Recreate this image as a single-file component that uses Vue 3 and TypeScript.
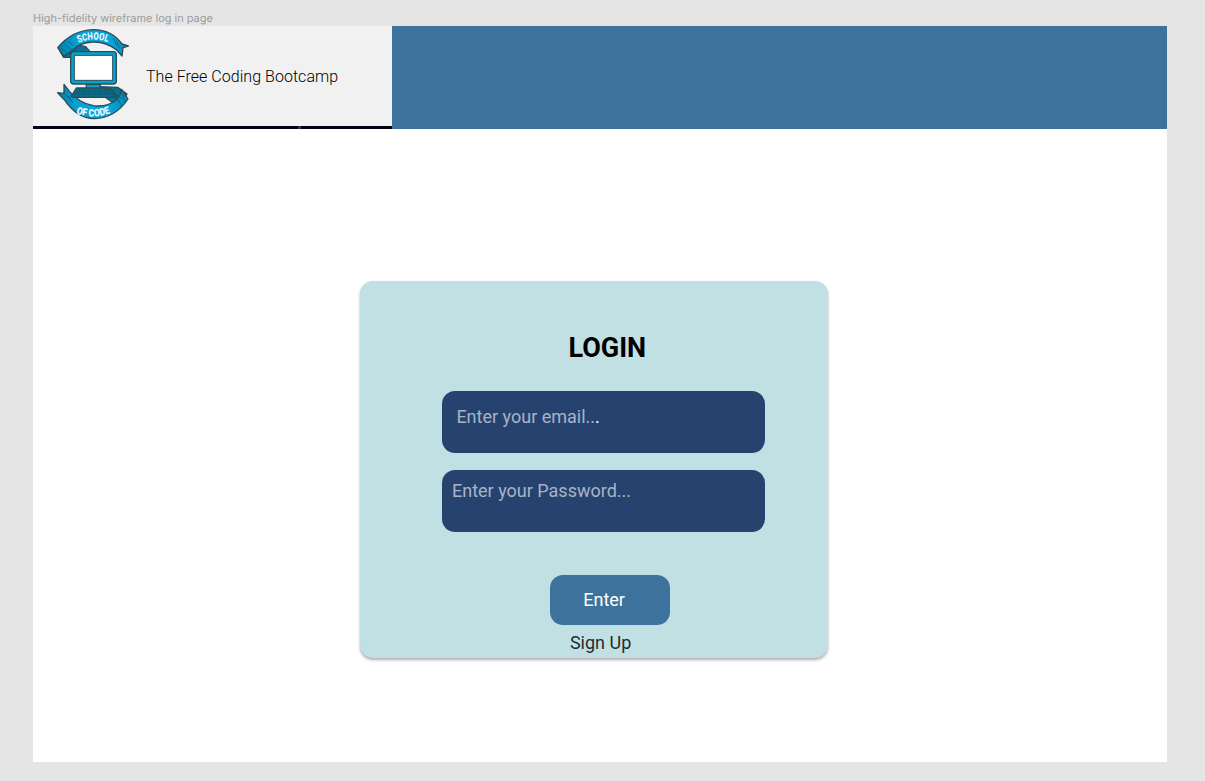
<script setup lang="ts">
import { ref } from 'vue'

interface Field {
  id: string
  label: string
  tail: string
}

const frameName = 'High-fidelity wireframe log in page'
const fields = ref<Field[]>([
  { id: 'email', label: 'Enter your email..', tail: '.' },
  { id: 'password', label: 'Enter your Password...', tail: '' },
])
</script>

<template>
  <div class="canvas">
    <div class="frame-name">{{ frameName }}</div>
    <main class="frame">
      <header class="header">
        <div class="brand">
          <svg class="logo" viewBox="0 0 300 330" aria-label="School of Code">
            <defs>
              <linearGradient id="ribbon" x1="0" x2="1" y1="0" y2="0">
                <stop offset="0" stop-color="#087da7" />
                <stop offset="0.28" stop-color="#06a2d6" />
                <stop offset="0.75" stop-color="#06a6da" />
                <stop offset="1" stop-color="#0789b5" />
              </linearGradient>
              <path id="arc-top" d="M84 78Q144 41 205 74" />
              <path id="arc-bottom" d="M76 274Q144 306 213 272" />
            </defs>
            <g stroke="#2b4d57" stroke-width="4" stroke-linejoin="round">
              <path d="M44 92L93 74L122 80L138 98L80 98L76 112H56Z" fill="#0b7796" />
              <path d="M38 83Q82 31 143 29Q199 28 231 72L250 78L234 83L231 108L215 90Q184 65 144 66Q103 66 75 98L57 109Z" fill="url(#ribbon)" />
              <path d="M160 200L218 202L246 222L222 262L184 234Z" fill="#0b7796" />
              <path d="M38 218L57 220L57 193L74 215Q103 250 145 257Q186 262 213 241Q227 228 230 208L249 237Q211 294 148 296Q95 295 58 239Z" fill="url(#ribbon)" />
              <path d="M124 193H166V207H124Z" fill="#06a1ce" />
              <path d="M94 204H195L216 228Q217 232 211 232H82Q76 231 81 225Z" fill="#0d6b89" />
              <rect x="77" y="95" width="137" height="97" rx="9" fill="#06a1ce" />
              <rect x="88" y="106" width="115" height="75" fill="#fff" stroke-width="3" />
            </g>
            <g fill="none" stroke="#154f62" stroke-width="2">
              <path d="M48 83L65 98M59 72L76 88M70 63L86 78M214 61L224 86M205 55L214 76M58 108L82 86M72 105L96 82M89 96L110 81M104 95L121 83M180 199L224 249M191 200L233 239M204 202L240 229M222 238L230 260M233 225L239 247M57 219L76 238M68 226L83 248" />
              <path d="M94 213H195M88 221H207M105 207L99 228M120 207L116 228M135 207L133 228M150 207V228M165 207L168 228M180 207L186 228" stroke-dasharray="7 4" />
            </g>
            <g class="logo-text">
              <text><textPath href="#arc-top" startOffset="50%" text-anchor="middle" textLength="90" lengthAdjust="spacingAndGlyphs">SCHOOL</textPath></text>
              <text><textPath href="#arc-bottom" startOffset="50%" text-anchor="middle" textLength="106" lengthAdjust="spacingAndGlyphs">OF CODE</textPath></text>
            </g>
          </svg>
          <span class="tagline">The Free Coding Bootcamp</span>
        </div>
      </header>

      <section class="card">
        <h1 class="title">LOGIN</h1>
        <div v-for="field in fields" :key="field.id" class="field" :class="field.id">
          <span>{{ field.label }}<b v-if="field.tail">{{ field.tail }}</b></span>
        </div>
        <button class="enter" type="button">Enter</button>
        <a class="signup">Sign Up</a>
      </section>
    </main>
  </div>
</template>

<style>
body {
  margin: 0;
  background: #e5e5e5;
}
</style>

<style scoped>
.canvas {
  box-sizing: border-box;
  width: 1205px;
  height: 781px;
  padding: 11px 0 0 33px;
  overflow: hidden;
  background: #e5e5e5;
  font-family: Roboto, "Liberation Sans", sans-serif;
}

.frame-name {
  height: 15px;
  font: 11px/15px Inter, sans-serif;
  letter-spacing: -0.02px;
  text-rendering: geometricPrecision;
  color: #9b9b9b;
  white-space: nowrap;
}

.frame {
  display: flow-root;
  width: 1133.7px;
  height: 736.3px;
  background: #fff;
}

.header {
  height: 103px;
  background: #3d729d;
}

.brand {
  position: relative;
  box-sizing: border-box;
  display: flex;
  align-items: center;
  width: 359px;
  height: 103px;
  border-bottom: 3px solid #020316;
  background: #f1f1f1;
}

.brand::after {
  content: "";
  position: absolute;
  left: 265px;
  bottom: -3px;
  width: 3px;
  height: 3px;
  background: #33343f;
}

.logo {
  flex: none;
  width: 100px;
  height: 110px;
  margin: -2px 0 0 12px;
}

.logo-text {
  font: 900 31px Roboto, sans-serif;
  fill: #e8faff;
}

.tagline {
  margin: 2px 0 0 1px;
  font-size: 16px;
  font-weight: 300;
  letter-spacing: 0.04px;
  line-height: 20px;
  color: #000;
  white-space: nowrap;
}

.card {
  display: flex;
  flex-direction: column;
  box-sizing: border-box;
  width: 468px;
  height: 376.5px;
  margin: 152.4px 0 0 326.5px;
  padding-left: 82.9px;
  border-radius: 13px;
  background: #c1e0e3;
  box-shadow: 0 2px 3px rgba(0, 0, 0, 0.32);
}

.title {
  margin: 51px 0 27px 126px;
  font-size: 27px;
  font-weight: 700;
  line-height: 32px;
  color: #000;
}

.field {
  box-sizing: border-box;
  width: 323px;
  height: 62px;
  border-radius: 13px;
  background: #26436f;
  color: #a8b4c5;
  font-size: 18px;
  line-height: 22px;
  white-space: nowrap;
}

.field b {
  font-weight: 400;
  color: #fff;
}

.email {
  padding: 15px 0 0 14px;
}

.password {
  margin-top: 17px;
  padding: 10px 0 0 9.6px;
}

.enter {
  width: 120px;
  height: 50px;
  margin: 43px 0 0 108px;
  padding: 0 12.6px 0 0;
  border: 0;
  border-radius: 13px;
  background: #3d729d;
  color: #fff;
  font: 400 18px/22px Roboto, sans-serif;
}

.signup {
  margin: 6.5px 0 0 127.5px;
  font-size: 18px;
  line-height: 22px;
  color: #222d30;
}
</style>
